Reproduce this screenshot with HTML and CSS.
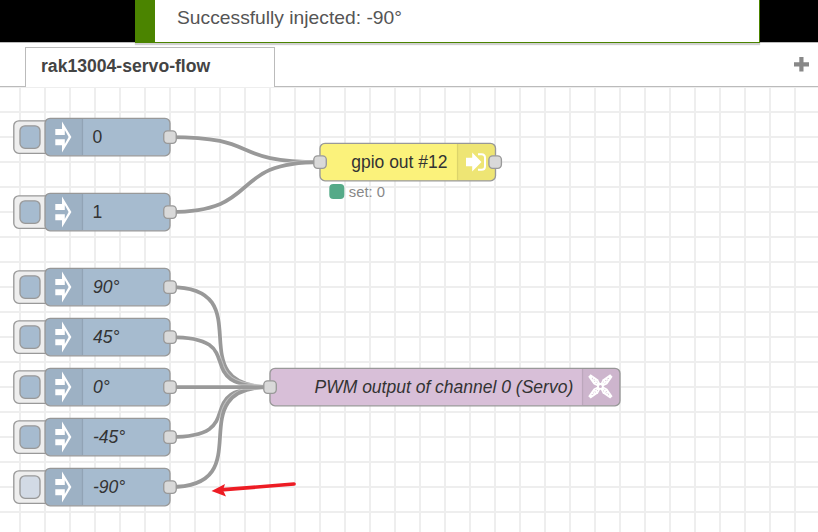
FILE: index.html
```html
<!DOCTYPE html>
<html lang="en">
<head>
<meta charset="utf-8">
<title>rak13004-servo-flow</title>
<link rel="stylesheet" href="styles.css">
</head>
<body>
<header class="header"></header>
<div class="notification">Successfully injected: -90°</div>
<nav class="tabs">
  <div class="tab">rak13004-servo-flow</div>
  <button class="add" aria-label="Add flow"><svg width="15" height="15" viewBox="0 0 15 15"><path d="M5.3 0h4.2v5.2H15v4.2H9.5V14.5H5.3V9.4H0V5.2h5.3z"/></svg></button>
</nav>
<svg class="canvas" width="818" height="445" viewBox="0 87 818 445">
  <defs>
    <pattern id="grid" x="19" y="86" width="25" height="25" patternUnits="userSpaceOnUse">
      <path class="grid-line" d="M0 0h25v2H2v23H0z"/>
    </pattern>
    <g id="inject">
      <rect class="button" x="-31.2" y="-16.2" width="40" height="32.5" rx="5"/>
      <rect class="body blue" x="0" y="-18.7" width="125" height="37.5" rx="5"/>
      <path class="shade" d="M37.5 -18.2H5a4.5 4.5 0 0 0-4.5 4.5v27.4a4.5 4.5 0 0 0 4.5 4.5h32.5z"/>
      <path class="divider" d="M37.5 -18v36"/>
      <path class="icon" d="M10.3 -8H17V-15.4L26.4 0L17 15.6V8.2H10.3V2.2H19.800V7L23.600 0L19.800 -7V-2H10.3z"/>
      <rect class="port" x="118.75" y="-6.2" width="12.5" height="12.5" rx="3.75"/>
    </g>
    <rect id="inner" class="body" x="-25" y="-11.2" width="20" height="22.5" rx="5"/>
    <g id="blade">
      <path class="icon" d="M-1.5 -1L-3.3 -6.5L-1.7 -15.500H1.7L3.3 -6.5L1.5 -1z"/>
      <path class="dots" d="M-1 -4.5L0 -12.5L1.2 -4.5"/>
    </g>
  </defs>
  <rect x="0" y="87" width="818" height="445" fill="url(#grid)"/>
  <g class="wires">
    <path class="outline" d="M170 137C263.75 137 226.25 162 320 162"/><path class="wire" d="M170 137C263.75 137 226.25 162 320 162"/>
    <path class="outline" d="M170 212C263.75 212 226.25 162 320 162"/><path class="wire" d="M170 212C263.75 212 226.25 162 320 162"/>
    <path class="outline" d="M170 287C263.75 287 176.25 387 270 387"/><path class="wire" d="M170 287C263.75 287 176.25 387 270 387"/>
    <path class="outline" d="M170 337C253.85 337 186.15 387 270 387"/><path class="wire" d="M170 337C253.85 337 186.15 387 270 387"/>
    <path class="outline" d="M170 437C253.85 437 186.15 387 270 387"/><path class="wire" d="M170 437C253.85 437 186.15 387 270 387"/>
    <path class="outline" d="M170 487C263.75 487 176.25 387 270 387"/><path class="wire" d="M170 487C263.75 487 176.25 387 270 387"/>
    <path class="outline" d="M170 387H270"/><path class="wire" d="M170 387H270"/>
  </g>
  <g transform="translate(45 137)"><use href="#inject"/><use href="#inner" class="blue"/><text x="47.5" y="6">0</text></g>
  <g transform="translate(45 212)"><use href="#inject"/><use href="#inner" class="blue"/><text x="47.5" y="6">1</text></g>
  <g transform="translate(45 287)"><use href="#inject"/><use href="#inner" class="blue"/><text class="italic" x="48" y="6">90°</text></g>
  <g transform="translate(45 337)"><use href="#inject"/><use href="#inner" class="blue"/><text class="italic" x="48" y="6">45°</text></g>
  <g transform="translate(45 387)"><use href="#inject"/><use href="#inner" class="blue"/><text class="italic" x="48" y="6">0°</text></g>
  <g transform="translate(45 437)"><use href="#inject"/><use href="#inner" class="blue"/><text class="italic" x="48" y="6">-45°</text></g>
  <g transform="translate(45 487)"><use href="#inject"/><use href="#inner" class="pressed"/><text class="italic" x="48" y="6">-90°</text></g>

  <g transform="translate(320 162)">
    <rect class="body yellow" x="0" y="-18.7" width="175.5" height="37.5" rx="5"/>
    <path class="shade" d="M137.5 -18.2H170.5a4.5 4.5 0 0 1 4.5 4.5v27.4a4.5 4.5 0 0 1-4.5 4.5h-33z"/>
    <path class="divider" d="M137.5 -18v36"/>
    <path class="icon" d="M146 -4.200h6.200v-5.200l9.300 9.400-9.300 9.400v-5.200h-6.200z"/>
    <path class="bracket" d="M158 -7.800h3.500q3.500 0 3.500 3.500v8.600q0 3.500-3.500 3.500H158"/>
    <rect class="port" x="-6.2" y="-6.2" width="12.5" height="12.5" rx="3.75"/>
    <rect class="port" x="168.9" y="-6.2" width="12.5" height="12.5" rx="3.75"/>
    <text x="31.2" y="6">gpio out #12</text>
    <rect class="status" x="9.3" y="22" width="15" height="15" rx="4"/>
    <text class="status-text" x="28.8" y="35">set: 0</text>
  </g>
  <g transform="translate(270 387)">
    <rect class="body purple" x="0" y="-18.7" width="350" height="37.5" rx="5"/>
    <path class="shade" d="M312.5 -18.2H345a4.5 4.5 0 0 1 4.5 4.5v27.4a4.5 4.5 0 0 1-4.5 4.5h-32.5z"/>
    <path class="divider" d="M312.5 -18v36"/>
    <g transform="translate(330.4 -0.6)">
      <use href="#blade" transform="rotate(45)"/><use href="#blade" transform="rotate(135)"/><use href="#blade" transform="rotate(225)"/><use href="#blade" transform="rotate(315)"/>
      <circle class="hub" r="2.4"/>
    </g>
    <rect class="port" x="-6.2" y="-6.2" width="12.5" height="12.5" rx="3.75"/>
    <text class="italic" x="44.5" y="6">PWM output of channel 0 (Servo)</text>
  </g>
  <path class="arrow-line" d="M294 484L224 489.7"/>
  <path class="arrow-head" d="M211.5 491L225 484L223 490L226 496.5z"/>
</svg>
</body>
</html>
```
FILE: styles.css
```css
body { margin: 0; width: 818px; height: 532px; overflow: hidden; background: #fff; font-family: "Liberation Sans", Arial, sans-serif; }
.header { height: 42px; background: #000; border-bottom: 1px solid #bbb; }
.notification { position: absolute; left: 135px; top: 0; box-sizing: border-box; width: 625px; height: 43px; padding: 7px 0 0 22px; border: solid #4b8400; border-width: 0 1px 1px 20px; background: #fff; box-shadow: 0 2px 1px rgba(0,0,0,.18); color: #555; font-size: 19.25px; line-height: 22px; }
.tabs { display: flex; justify-content: space-between; height: 44px; box-sizing: border-box; padding: 4px 9px 0 25px; background: linear-gradient(#bbb,#bbb) 0 100% / 100% 1px no-repeat; }
.tab { box-sizing: border-box; width: 250px; height: 40px; padding-left: 15px; border: solid #bbb; border-width: 1px 1px 0; background: #fff; color: #444; font-size: 17.6px; font-weight: bold; line-height: 37px; }
.add { display: flex; padding: 10px 0 0; border: 0; background: none; fill: #888; }
.canvas { display: block; }
.grid-line { fill: #eee; }
.wire { fill: none; stroke: #999; stroke-width: 3.75; }
.outline { fill: none; stroke: #fff; stroke-width: 5.5; stroke-opacity: .4; }
.button { fill: #eee; stroke: #999; stroke-width: 1.35; }
.body { stroke: #999; stroke-width: 1.35; }
.blue { fill: #a6bbcf; }
.pressed { fill: #d2dae5; }
.yellow { fill: #fbf27b; }
.purple { fill: #d8bfd8; }
.shade { fill: #000; fill-opacity: .05; }
.divider { stroke: #000; stroke-opacity: .1; stroke-width: 1.25; }
.icon { fill: #fff; }
.bracket { fill: none; stroke: #fff; stroke-width: 2; }
.port { fill: #d9d9d9; stroke: #999; stroke-width: 1.35; }
text { fill: #333; font-size: 17.5px; }
.italic { font-style: italic; }
.status { fill: #5a8; }
.status-text { fill: #888; font-size: 14.8px; }
.dots { fill: none; stroke: #cdb5cd; stroke-width: .9; stroke-dasharray: .9 2; }
.hub { fill: #cdb5cd; stroke: #fff; stroke-width: 1.8; }
.arrow-line { stroke: #ed1c24; stroke-width: 3.7; stroke-linecap: round; }
.arrow-head { fill: #ed1c24; }
```
